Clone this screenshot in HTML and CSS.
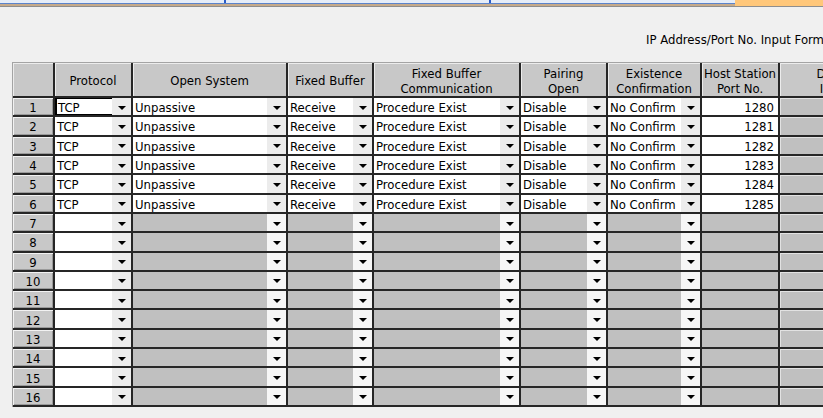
FILE: index.html
```html
<!DOCTYPE html>
<html lang="en">
<head>
	<title>Open Setting</title>
	<meta charset="utf-8">
	<link rel="stylesheet" href="styles.css">
</head>
<body>
	<div class="topbar">
		<div class="tabs">
			<div class="tab tab-a"></div>
			<div class="tab tab-b"></div>
		</div>
		<div class="flag"></div>
	</div>
	<div class="caption">IP Address/Port No. Input Format</div>
	<div class="grid">
		<div class="hd"></div>
		<div class="hd">Protocol</div>
		<div class="hd">Open System</div>
		<div class="hd">Fixed Buffer</div>
		<div class="hd">Fixed Buffer<br>Communication</div>
		<div class="hd">Pairing<br>Open</div>
		<div class="hd">Existence<br>Confirmation</div>
		<div class="hd">Host Station<br>Port No.</div>
		<div class="hd">Destination<br>IP Address</div>

		<div class="num">1</div>
		<div class="cb focus"><span class="val">TCP</span><span class="btn"></span></div>
		<div class="cb"><span class="val">Unpassive</span><span class="btn"></span></div>
		<div class="cb"><span class="val">Receive</span><span class="btn"></span></div>
		<div class="cb"><span class="val">Procedure Exist</span><span class="btn"></span></div>
		<div class="cb"><span class="val">Disable</span><span class="btn"></span></div>
		<div class="cb"><span class="val">No Confirm</span><span class="btn"></span></div>
		<div class="port">1280</div>
		<div class="dst"></div>

		<div class="num">2</div>
		<div class="cb"><span class="val">TCP</span><span class="btn"></span></div>
		<div class="cb"><span class="val">Unpassive</span><span class="btn"></span></div>
		<div class="cb"><span class="val">Receive</span><span class="btn"></span></div>
		<div class="cb"><span class="val">Procedure Exist</span><span class="btn"></span></div>
		<div class="cb"><span class="val">Disable</span><span class="btn"></span></div>
		<div class="cb"><span class="val">No Confirm</span><span class="btn"></span></div>
		<div class="port">1281</div>
		<div class="dst"></div>

		<div class="num">3</div>
		<div class="cb"><span class="val">TCP</span><span class="btn"></span></div>
		<div class="cb"><span class="val">Unpassive</span><span class="btn"></span></div>
		<div class="cb"><span class="val">Receive</span><span class="btn"></span></div>
		<div class="cb"><span class="val">Procedure Exist</span><span class="btn"></span></div>
		<div class="cb"><span class="val">Disable</span><span class="btn"></span></div>
		<div class="cb"><span class="val">No Confirm</span><span class="btn"></span></div>
		<div class="port">1282</div>
		<div class="dst"></div>

		<div class="num">4</div>
		<div class="cb"><span class="val">TCP</span><span class="btn"></span></div>
		<div class="cb"><span class="val">Unpassive</span><span class="btn"></span></div>
		<div class="cb"><span class="val">Receive</span><span class="btn"></span></div>
		<div class="cb"><span class="val">Procedure Exist</span><span class="btn"></span></div>
		<div class="cb"><span class="val">Disable</span><span class="btn"></span></div>
		<div class="cb"><span class="val">No Confirm</span><span class="btn"></span></div>
		<div class="port">1283</div>
		<div class="dst"></div>

		<div class="num">5</div>
		<div class="cb"><span class="val">TCP</span><span class="btn"></span></div>
		<div class="cb"><span class="val">Unpassive</span><span class="btn"></span></div>
		<div class="cb"><span class="val">Receive</span><span class="btn"></span></div>
		<div class="cb"><span class="val">Procedure Exist</span><span class="btn"></span></div>
		<div class="cb"><span class="val">Disable</span><span class="btn"></span></div>
		<div class="cb"><span class="val">No Confirm</span><span class="btn"></span></div>
		<div class="port">1284</div>
		<div class="dst"></div>

		<div class="num">6</div>
		<div class="cb"><span class="val">TCP</span><span class="btn"></span></div>
		<div class="cb"><span class="val">Unpassive</span><span class="btn"></span></div>
		<div class="cb"><span class="val">Receive</span><span class="btn"></span></div>
		<div class="cb"><span class="val">Procedure Exist</span><span class="btn"></span></div>
		<div class="cb"><span class="val">Disable</span><span class="btn"></span></div>
		<div class="cb"><span class="val">No Confirm</span><span class="btn"></span></div>
		<div class="port">1285</div>
		<div class="dst"></div>

		<div class="num">7</div>
		<div class="cb"><span class="val"></span><span class="btn"></span></div>
		<div class="cb off"><span class="val"></span><span class="btn"></span></div>
		<div class="cb off"><span class="val"></span><span class="btn"></span></div>
		<div class="cb off"><span class="val"></span><span class="btn"></span></div>
		<div class="cb off"><span class="val"></span><span class="btn"></span></div>
		<div class="cb off"><span class="val"></span><span class="btn"></span></div>
		<div class="port off"></div>
		<div class="dst"></div>

		<div class="num">8</div>
		<div class="cb"><span class="val"></span><span class="btn"></span></div>
		<div class="cb off"><span class="val"></span><span class="btn"></span></div>
		<div class="cb off"><span class="val"></span><span class="btn"></span></div>
		<div class="cb off"><span class="val"></span><span class="btn"></span></div>
		<div class="cb off"><span class="val"></span><span class="btn"></span></div>
		<div class="cb off"><span class="val"></span><span class="btn"></span></div>
		<div class="port off"></div>
		<div class="dst"></div>

		<div class="num">9</div>
		<div class="cb"><span class="val"></span><span class="btn"></span></div>
		<div class="cb off"><span class="val"></span><span class="btn"></span></div>
		<div class="cb off"><span class="val"></span><span class="btn"></span></div>
		<div class="cb off"><span class="val"></span><span class="btn"></span></div>
		<div class="cb off"><span class="val"></span><span class="btn"></span></div>
		<div class="cb off"><span class="val"></span><span class="btn"></span></div>
		<div class="port off"></div>
		<div class="dst"></div>

		<div class="num">10</div>
		<div class="cb"><span class="val"></span><span class="btn"></span></div>
		<div class="cb off"><span class="val"></span><span class="btn"></span></div>
		<div class="cb off"><span class="val"></span><span class="btn"></span></div>
		<div class="cb off"><span class="val"></span><span class="btn"></span></div>
		<div class="cb off"><span class="val"></span><span class="btn"></span></div>
		<div class="cb off"><span class="val"></span><span class="btn"></span></div>
		<div class="port off"></div>
		<div class="dst"></div>

		<div class="num">11</div>
		<div class="cb"><span class="val"></span><span class="btn"></span></div>
		<div class="cb off"><span class="val"></span><span class="btn"></span></div>
		<div class="cb off"><span class="val"></span><span class="btn"></span></div>
		<div class="cb off"><span class="val"></span><span class="btn"></span></div>
		<div class="cb off"><span class="val"></span><span class="btn"></span></div>
		<div class="cb off"><span class="val"></span><span class="btn"></span></div>
		<div class="port off"></div>
		<div class="dst"></div>

		<div class="num">12</div>
		<div class="cb"><span class="val"></span><span class="btn"></span></div>
		<div class="cb off"><span class="val"></span><span class="btn"></span></div>
		<div class="cb off"><span class="val"></span><span class="btn"></span></div>
		<div class="cb off"><span class="val"></span><span class="btn"></span></div>
		<div class="cb off"><span class="val"></span><span class="btn"></span></div>
		<div class="cb off"><span class="val"></span><span class="btn"></span></div>
		<div class="port off"></div>
		<div class="dst"></div>

		<div class="num">13</div>
		<div class="cb"><span class="val"></span><span class="btn"></span></div>
		<div class="cb off"><span class="val"></span><span class="btn"></span></div>
		<div class="cb off"><span class="val"></span><span class="btn"></span></div>
		<div class="cb off"><span class="val"></span><span class="btn"></span></div>
		<div class="cb off"><span class="val"></span><span class="btn"></span></div>
		<div class="cb off"><span class="val"></span><span class="btn"></span></div>
		<div class="port off"></div>
		<div class="dst"></div>

		<div class="num">14</div>
		<div class="cb"><span class="val"></span><span class="btn"></span></div>
		<div class="cb off"><span class="val"></span><span class="btn"></span></div>
		<div class="cb off"><span class="val"></span><span class="btn"></span></div>
		<div class="cb off"><span class="val"></span><span class="btn"></span></div>
		<div class="cb off"><span class="val"></span><span class="btn"></span></div>
		<div class="cb off"><span class="val"></span><span class="btn"></span></div>
		<div class="port off"></div>
		<div class="dst"></div>

		<div class="num">15</div>
		<div class="cb"><span class="val"></span><span class="btn"></span></div>
		<div class="cb off"><span class="val"></span><span class="btn"></span></div>
		<div class="cb off"><span class="val"></span><span class="btn"></span></div>
		<div class="cb off"><span class="val"></span><span class="btn"></span></div>
		<div class="cb off"><span class="val"></span><span class="btn"></span></div>
		<div class="cb off"><span class="val"></span><span class="btn"></span></div>
		<div class="port off"></div>
		<div class="dst"></div>

		<div class="num">16</div>
		<div class="cb"><span class="val"></span><span class="btn"></span></div>
		<div class="cb off"><span class="val"></span><span class="btn"></span></div>
		<div class="cb off"><span class="val"></span><span class="btn"></span></div>
		<div class="cb off"><span class="val"></span><span class="btn"></span></div>
		<div class="cb off"><span class="val"></span><span class="btn"></span></div>
		<div class="cb off"><span class="val"></span><span class="btn"></span></div>
		<div class="port off"></div>
		<div class="dst"></div>
	</div>
</body>
</html>
```

FILE: styles.css
```css
* {
	box-sizing: border-box;
}

html, body {
	margin: 0;
	height: 100%;
	overflow: hidden;
	background-color: #f0f0f0;
	color: #000;
	font-family: "DejaVu Sans Condensed", "DejaVu Sans", sans-serif;
	font-stretch: condensed;
	font-size: 13px;
}

/* window strip at the very top */
.topbar {
	display: flex;
	height: 7px;
	background-color: #c6aa8a;
	border-bottom: 1px solid #8e8e8e;
}

	.tabs {
		flex: 1;
		display: flex;
		height: 4px;
		background-color: #e6edf8;
		border-bottom: 1px solid #5b84cc;
	}

	.tab {
		height: 3px;
		border-right: 2px solid #2a5bc8;
	}

	.tab-a {
		width: 226px;
	}

	.tab-b {
		width: 265px;
	}

	.flag {
		width: 88px;
		height: 6px;
		background-color: #ffc77a;
	}

.caption {
	margin: 25px 0 0 646px;
	line-height: 15px;
	white-space: nowrap;
}

/* setting grid */
.grid {
	display: grid;
	width: max-content;
	height: 345px;
	margin: 15px 0 0 12px;
	padding-bottom: 2px;
	grid-template-columns: 40px 76px 153px 84px 145px 85px 92px 76px 140px;
	grid-template-rows: 33px repeat(16, minmax(0, 1fr));
	gap: 2px;
	background-color: #262626;
	border-top: 1px solid #a4a4a4;
	border-left: 1px solid #a4a4a4;
}

.hd {
	display: flex;
	align-items: center;
	justify-content: center;
	text-align: center;
	line-height: 15px;
	padding-top: 2px;
	background-color: #c8c8c8;
	box-shadow: inset 1px 1px 0 #ececec;
}

.num, .val, .port {
	line-height: 14px;
	min-height: 0;
}

.num {
	display: flex;
	align-items: center;
	justify-content: center;
	padding-top: 3px;
	background-color: #c8c8c8;
	box-shadow: inset 1px 1px 0 #f2f2f2, inset -1px -1px 0 #9a9a9a;
}

.cb {
	display: flex;
	min-height: 0;
	background-color: #fff;
}

	.cb.off {
		background-color: #c0c0c0;
	}

	.cb.focus {
		box-shadow: inset 2px 1px 0 #000, inset 0 -1px 0 #000;
	}

	.val {
		flex: 1;
		display: flex;
		align-items: center;
		padding: 3px 0 0 2px;
		white-space: nowrap;
		overflow: hidden;
	}

	.focus .val {
		padding-left: 3px;
	}

	.btn {
		display: flex;
		align-items: center;
		justify-content: center;
		width: 19px;
		padding-top: 2px;
		background-color: #ececec;
	}

		.cb.off .btn {
			background-color: #f6f6f6;
		}

		.btn::after {
			content: "";
			border-left: 4px solid transparent;
			border-right: 4px solid transparent;
			border-top: 4px solid #000;
		}

.port {
	display: flex;
	align-items: center;
	justify-content: flex-end;
	padding: 3px 4px 0 0;
	background-color: #fff;
}

	.port.off {
		background-color: #c0c0c0;
	}

.dst {
	background-color: #c0c0c0;
	box-shadow: inset 1px 1px 0 #e2e2e2;
}
```
